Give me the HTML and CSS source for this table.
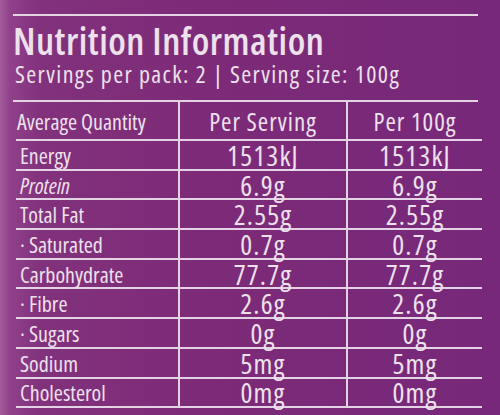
FILE: index.html
```
<!DOCTYPE html>
<html lang="en">
<head>
    <meta charset="UTF-8">
    <title>Nutrition Information</title>
    <link rel="stylesheet" href="styles.css">
</head>
<body>
    <div class="panel">
        <div class="head">
            <h1 class="title">Nutrition Information</h1>
            <p class="serves">Servings per pack: 2 | Serving size: 100g</p>
        </div>
        <table class="facts">
            <colgroup>
                <col class="c1">
                <col class="c2">
                <col class="c3">
            </colgroup>
            <tr class="top">
                <th>Average Quantity</th>
                <th class="num">Per Serving</th>
                <th class="num">Per 100g</th>
            </tr>
            <tr><td>Energy</td><td class="num">1513kJ</td><td class="num">1513kJ</td></tr>
            <tr><td class="it">Protein</td><td class="num">6.9g</td><td class="num">6.9g</td></tr>
            <tr><td>Total Fat</td><td class="num">2.55g</td><td class="num">2.55g</td></tr>
            <tr><td>· Saturated</td><td class="num">0.7g</td><td class="num">0.7g</td></tr>
            <tr><td>Carbohydrate</td><td class="num">77.7g</td><td class="num">77.7g</td></tr>
            <tr><td>· Fibre</td><td class="num">2.6g</td><td class="num">2.6g</td></tr>
            <tr><td>· Sugars</td><td class="num">0g</td><td class="num">0g</td></tr>
            <tr><td>Sodium</td><td class="num">5mg</td><td class="num">5mg</td></tr>
            <tr><td>Cholesterol</td><td class="num">0mg</td><td class="num">0mg</td></tr>
        </table>
    </div>
</body>
</html>
```

FILE: styles.css
```
*{
    padding: 0;
    margin: 0;
}
body{
    width: 500px;
    height: 415px;
    overflow: hidden;
    background: linear-gradient(90deg, #a45d9c 0px, #90418a 10px, #82317c 40px, #7d2b78 200px, #77287a 500px);
    color: #ede1ec;
    font-family: "Open Sans", "Noto Sans", sans-serif;
    font-stretch: 75%;
}
.panel{
    padding: 14px 0 0 13px;
}
.head{
    width: 465px;
    border-top: 2px solid #e4d3e4;
    border-bottom: 2px solid #e4d3e4;
    padding-bottom: 14px;
}
.title{
    margin-top: 2px;
    font-size: 38px;
    font-weight: 600;
    line-height: 44px;
    letter-spacing: 0.5px;
}
.serves{
    font-size: 24px;
    font-weight: 500;
    line-height: 24px;
    letter-spacing: 1.4px;
    padding-left: 2px;
}
.facts{
    margin-left: 3px;
    width: 466px;
    table-layout: fixed;
    border-collapse: collapse;
}
.facts .c1{
    width: 163px;
}
.facts .c2{
    width: 168px;
}
.facts .c3{
    width: 135px;
}
.facts th,
.facts td{
    border-bottom: 2px solid #e4d3e4;
    text-align: left;
    font-weight: 500;
    font-size: 22px;
    height: 27.7px;
    line-height: 26px;
    padding: 0 0 0 4px;
    white-space: nowrap;
    vertical-align: middle;
}
.facts tr.top th{
    height: 37px;
    font-size: 22px;
    font-weight: 500;
    padding-left: 1px;
}
.facts th:nth-child(2),
.facts td:nth-child(2){
    border-left: 2px solid #e4d3e4;
    border-right: 2px solid #e4d3e4;
}
.facts .num{
    text-align: center;
    padding: 0;
    font-size: 28px;
    font-weight: 500;
    letter-spacing: 1.2px;
}
.facts tr.top .num{
    padding: 0;
    font-size: 25px;
    font-weight: 500;
    letter-spacing: 1px;
}
.facts .it{
    font-style: italic;
}
```
